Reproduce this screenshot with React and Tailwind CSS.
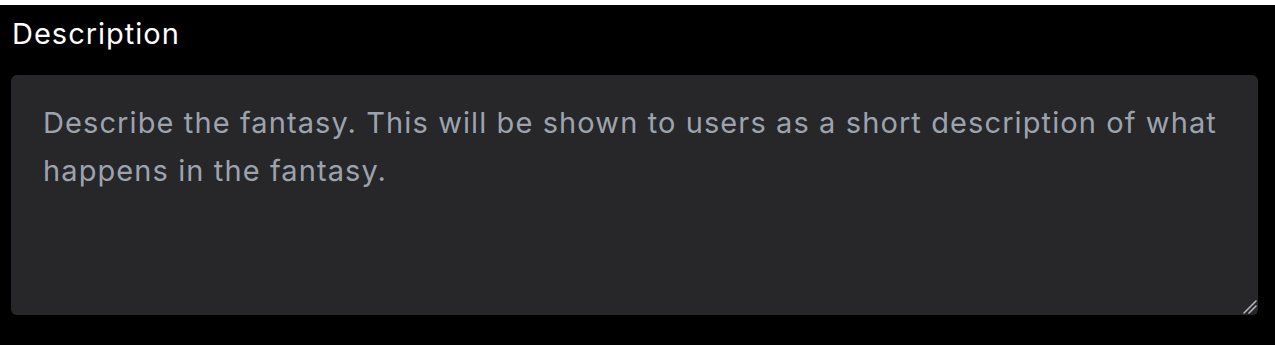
import React, { useState } from "react";

function DescriptionField() {
  const [description, setDescription] = useState("");

  return (
    <div className="bg-black h-[340px] pl-[11px] pr-[17px] pt-[11px]">
      <label
        htmlFor="description"
        className="block pl-[1px] text-white text-[29px] leading-[36px] tracking-[1px]"
      >
        Description
      </label>
      <div className="relative mt-[23px]">
        <textarea
          id="description"
          className="block w-full h-[240px] rounded-md bg-[#27272a] px-8 pt-[24px] pb-4 text-[29px] leading-[48px] tracking-[1.1px] text-white placeholder:text-[#9ca3af] focus:outline-none"
          placeholder="Describe the fantasy. This will be shown to users as a short description of what happens in the fantasy."
          value={description}
          onChange={(e) => setDescription(e.target.value)}
        />
        <svg
          className="pointer-events-none absolute right-[1px] bottom-[1px] bg-[#27272a]"
          width="14"
          height="14"
          viewBox="0 0 14 14"
        >
          <path d="M1 13 L13 1 M6 13 L13 6" stroke="#b4b4b8" strokeWidth="1.6" strokeLinecap="round" />
        </svg>
      </div>
    </div>
  );
}

export default function App() {
  return (
    <div
      className="bg-white pt-[5px]"
      style={{ fontFamily: "Inter, 'Noto Sans', sans-serif" }}
    >
      <DescriptionField />
    </div>
  );
}
